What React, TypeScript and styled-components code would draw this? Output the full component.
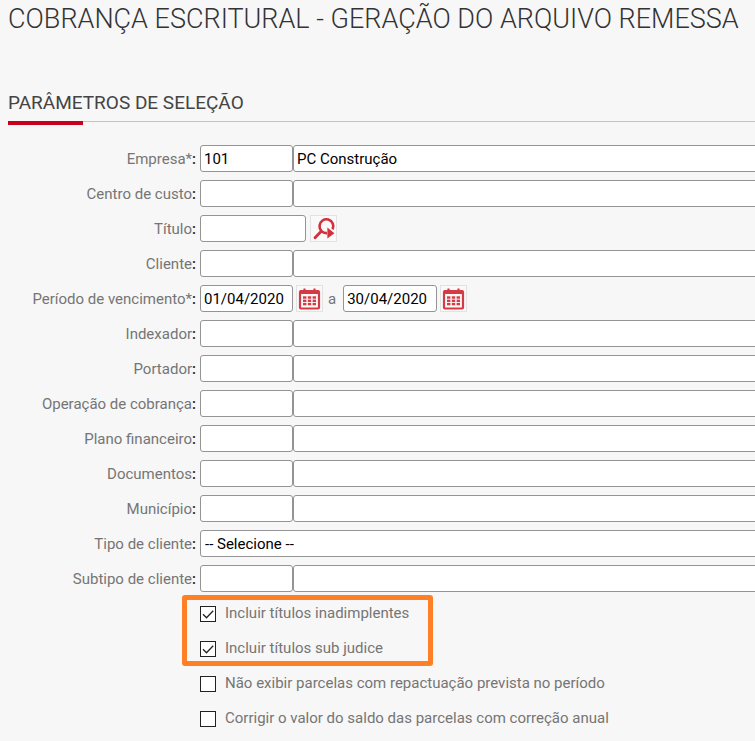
import React from "react";
import styled, { createGlobalStyle } from "styled-components";

const GlobalStyle = createGlobalStyle`
  *, *::before, *::after { box-sizing: border-box; }
  body {
    margin: 0;
    overflow-x: hidden;
    background: #f7f7f7;
    color: #333;
    font-family: Roboto, "Liberation Sans", sans-serif;
    font-size: 15px;
  }
`;

const Page = styled.main`
  padding: 0 0 8px 8px;
`;

const Title = styled.h1`
  margin: 0;
  font-size: 27px;
  font-weight: 300;
  line-height: 38px;
`;

const SectionTitle = styled.h2`
  position: relative;
  margin: 50px 0 0;
  padding-bottom: 4px;
  border-bottom: 1px solid #c3c3c3;
  color: #444;
  font-size: 19px;
  font-weight: 400;
  line-height: 29px;

  &::after {
    content: "";
    position: absolute;
    top: 100%;
    left: 0;
    width: 75px;
    height: 4px;
    background: #c8001e;
  }
`;

const Form = styled.form`
  display: flex;
  flex-direction: column;
  gap: 8px;
  margin-top: 23px;
`;

const Row = styled.div`
  display: grid;
  grid-template-columns: 188px 1fr;
  column-gap: 4px;
  align-items: start;
  height: 27px;
`;

const Label = styled.label`
  color: #757575;
  line-height: 28px;
  text-align: right;
  white-space: nowrap;

  &::after {
    content: ":";
    color: #222;
    font-weight: 500;
  }
`;

const Fields = styled.div<{ $bleed?: boolean }>`
  display: flex;
  align-items: center;
  margin-right: ${(p) => (p.$bleed ? "-4px" : "0")};
`;

const TextInput = styled.input<{ $width?: number }>`
  flex: ${(p) => (p.$width ? `0 0 ${p.$width}px` : "1 1 0")};
  width: 0;
  height: 27px;
  padding: 0 3px;
  border: 1px solid #949494;
  border-radius: 3px;
  background: #fff;
  color: #000;
  font: inherit;
`;

const Select = styled.select`
  flex: 1;
  height: 27px;
  padding: 0 4px;
  appearance: none;
  border: 1px solid #949494;
  border-radius: 3px;
  background: #fff;
  color: #000;
  font: inherit;
`;

const IconButton = styled.button<{ $gap: number }>`
  display: flex;
  align-items: center;
  justify-content: center;
  width: 27px;
  height: 27px;
  margin-left: ${(p) => p.$gap}px;
  padding: 0;
  border: 1px solid #e2e2e2;
  background: #f9f9f9;
  cursor: pointer;
`;

const Until = styled.label`
  margin: 0 7px 0 5px;
  color: #757575;
`;

const Options = styled.div`
  display: flex;
  flex-direction: column;
  align-items: flex-start;
  gap: 8px;
  margin: -1px 0 0 192px;
`;

const Highlighted = styled(Options)`
  position: relative;
  margin: 0;

  &::before {
    content: "";
    position: absolute;
    inset: -4px -24px -5px -18px;
    border: 5px solid #ff7f27;
    border-radius: 3px;
    pointer-events: none;
  }
`;

const Option = styled.label`
  display: flex;
  align-items: center;
  gap: 9px;
  height: 27px;
  color: #757575;
  white-space: nowrap;
`;

const Checkbox = styled.input`
  appearance: none;
  width: 16px;
  height: 16px;
  margin: 2px 0 0;
  border: 1px solid #222;
  background: #fff;
`;

const CheckHolder = styled.span`
  display: grid;

  & > * {
    grid-area: 1 / 1;
  }

  svg {
    margin-top: 2px;
    pointer-events: none;
    visibility: hidden;
  }

  input:checked + svg {
    visibility: visible;
  }
`;

const SearchIcon = () => (
  <svg width="25" height="25" viewBox="0 0 25 25" fill="none" aria-hidden="true">
    <path d="M10 15.5 4 21.8" stroke="#d2303c" strokeWidth="2.8" strokeLinecap="round" />
    <path d="M16 17.1a6.9 6.9 0 1 1 5.6-3.8" stroke="#d2303c" strokeWidth="2.6" />
    <path d="M16.4 11.5v11l7-5.2z" fill="#d2303c" />
  </svg>
);

const CalendarIcon = () => (
  <svg width="25" height="25" viewBox="0 0 25 25" fill="none" aria-hidden="true">
    <rect x="3" y="5" width="19" height="17.5" rx="1" stroke="#d63a44" strokeWidth="2.2" />
    <path d="M3 6.3h19" stroke="#d63a44" strokeWidth="3.4" />
    <path d="M7.5 2.5v4M17.5 2.5v4" stroke="#d63a44" strokeWidth="2.2" />
    <g fill="#d63a44">
      {[6, 10.8, 15.6].map((x) =>
        [10.3, 13.6, 16.9].map((y) => <rect key={`${x}-${y}`} x={x} y={y} width="3.4" height="2.4" />)
      )}
    </g>
  </svg>
);

const CodeRow = ({ id, label, code, name }: { id: string; label: string; code?: string; name?: string }) => (
  <Row>
    <Label htmlFor={id}>{label}</Label>
    <Fields $bleed>
      <TextInput id={id} $width={93} defaultValue={code} />
      <TextInput aria-label={`${label} - descrição`} defaultValue={name} />
    </Fields>
  </Row>
);

const CheckOption = ({ label, checked }: { label: string; checked?: boolean }) => (
  <Option>
    <CheckHolder>
      <Checkbox type="checkbox" defaultChecked={checked} />
      <svg width="16" height="16" viewBox="0 0 16 16" fill="none" aria-hidden="true">
        <path d="M3 8.2 6.5 11.7 13.2 4.8" stroke="#222" strokeWidth="1.3" />
      </svg>
    </CheckHolder>
    {label}
  </Option>
);

export default function App() {
  return (
    <>
      <GlobalStyle />
      <Page>
        <Title>COBRANÇA ESCRITURAL - GERAÇÃO DO ARQUIVO REMESSA</Title>
        <SectionTitle>PARÂMETROS DE SELEÇÃO</SectionTitle>
        <Form onSubmit={(e) => e.preventDefault()}>
          <CodeRow id="empresa" label="Empresa*" code="101" name="PC Construção" />
          <CodeRow id="centro" label="Centro de custo" />
          <Row>
            <Label htmlFor="titulo">Título</Label>
            <Fields>
              <TextInput id="titulo" $width={106} />
              <IconButton type="button" $gap={4} aria-label="Pesquisar título">
                <SearchIcon />
              </IconButton>
            </Fields>
          </Row>
          <CodeRow id="cliente" label="Cliente" />
          <Row>
            <Label htmlFor="inicio">Período de vencimento*</Label>
            <Fields>
              <TextInput id="inicio" $width={93} defaultValue="01/04/2020" />
              <IconButton type="button" $gap={3} aria-label="Escolher data inicial">
                <CalendarIcon />
              </IconButton>
              <Until htmlFor="fim">a</Until>
              <TextInput id="fim" $width={94} defaultValue="30/04/2020" />
              <IconButton type="button" $gap={3} aria-label="Escolher data final">
                <CalendarIcon />
              </IconButton>
            </Fields>
          </Row>
          <CodeRow id="indexador" label="Indexador" />
          <CodeRow id="portador" label="Portador" />
          <CodeRow id="operacao" label="Operação de cobrança" />
          <CodeRow id="plano" label="Plano financeiro" />
          <CodeRow id="documentos" label="Documentos" />
          <CodeRow id="municipio" label="Município" />
          <Row>
            <Label htmlFor="tipo">Tipo de cliente</Label>
            <Fields $bleed>
              <Select id="tipo">
                <option>-- Selecione --</option>
              </Select>
            </Fields>
          </Row>
          <CodeRow id="subtipo" label="Subtipo de cliente" />
          <Options>
            <Highlighted>
              <CheckOption label="Incluir títulos inadimplentes" checked />
              <CheckOption label="Incluir títulos sub judice" checked />
            </Highlighted>
            <CheckOption label="Não exibir parcelas com repactuação prevista no período" />
            <CheckOption label="Corrigir o valor do saldo das parcelas com correção anual" />
          </Options>
        </Form>
      </Page>
    </>
  );
}
